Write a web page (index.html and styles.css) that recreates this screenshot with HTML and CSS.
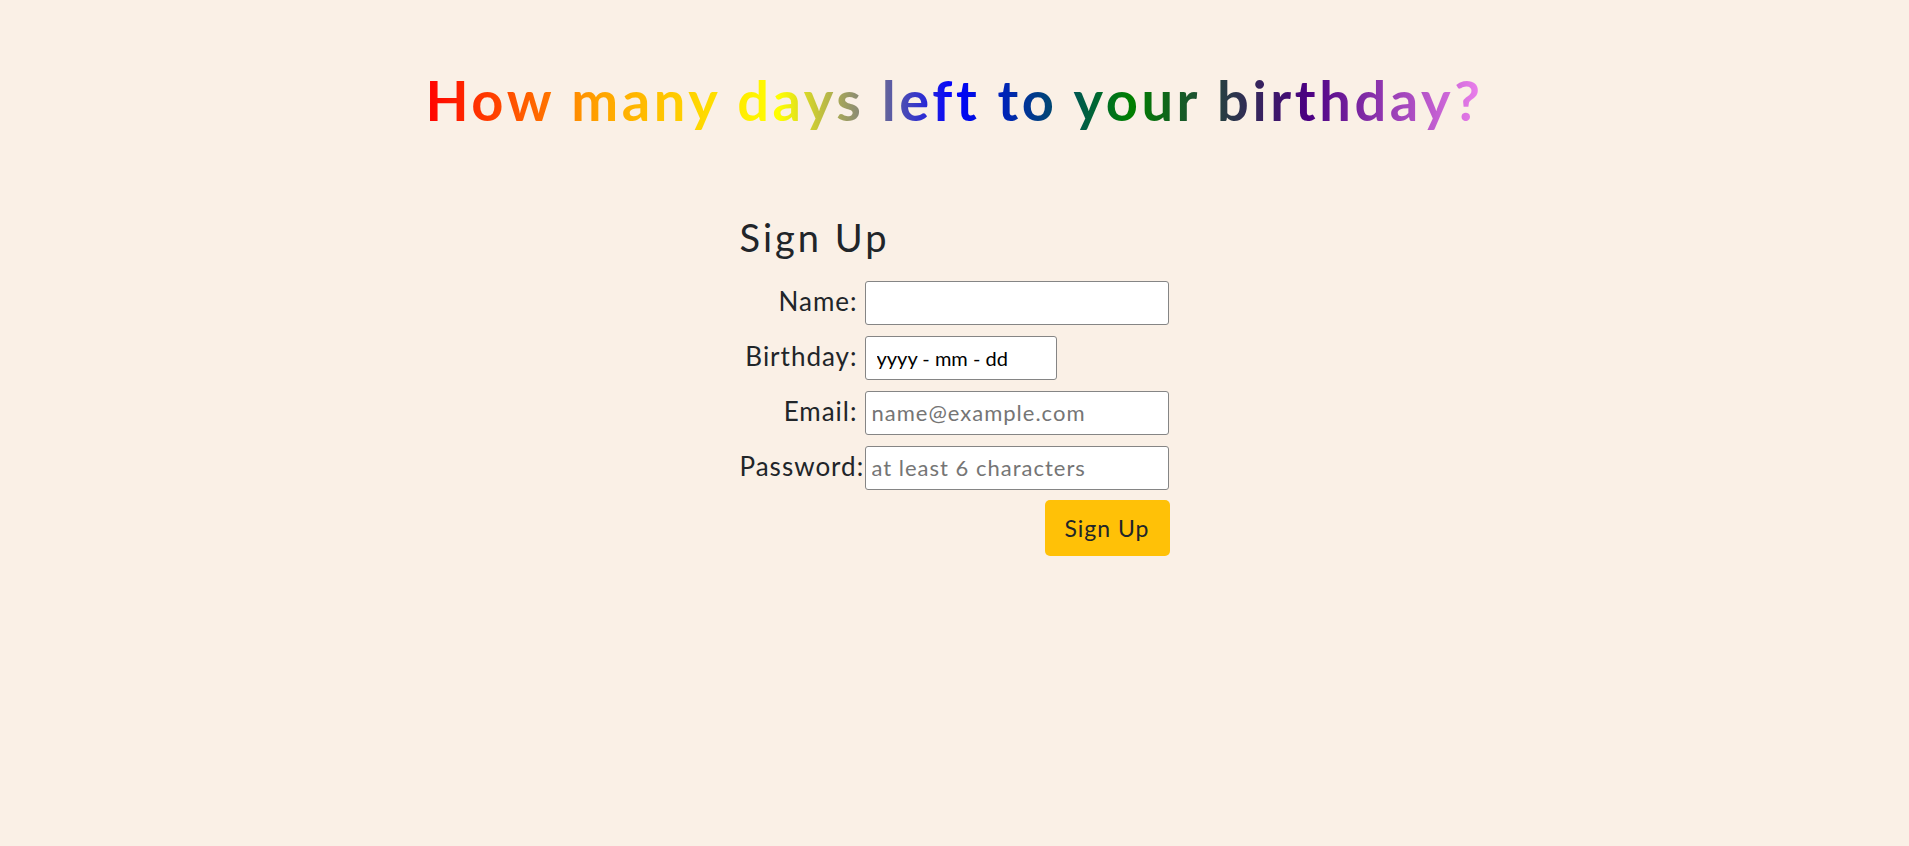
FILE: index.html
```html
<!DOCTYPE html>
<html lang="en">
<head>
<meta charset="utf-8">
<title>Birthday countdown</title>
<link rel="stylesheet" href="styles.css">
</head>
<body>
<main class="page">
  <h1 class="title"><span class="rainbow">How many days left to your birthday?</span></h1>
  <form class="signup">
    <h2 class="signup-title">Sign Up</h2>
    <div class="field">
      <label class="field-label" for="name">Name:</label>
      <input class="field-input" id="name" type="text">
    </div>
    <div class="field">
      <label class="field-label" for="birthday">Birthday:</label>
      <input class="field-input field-input--date" id="birthday" type="text" value="yyyy - mm - dd">
    </div>
    <div class="field">
      <label class="field-label" for="email">Email:</label>
      <input class="field-input" id="email" type="email" placeholder="name@example.com">
    </div>
    <div class="field">
      <label class="field-label" for="password">Password:</label>
      <input class="field-input" id="password" type="password" placeholder="at least 6 characters">
    </div>
    <div class="actions">
      <button class="btn-submit" type="button">Sign Up</button>
    </div>
  </form>
</main>
</body>
</html>
```
FILE: styles.css
```css
* { box-sizing: border-box; }

html, body {
  margin: 0;
  padding: 0;
}

body {
  background: #faf0e6;
  color: #212529;
  font-family: "Lato", "Noto Sans", sans-serif;
  min-height: 100vh;
}

.page {
  display: flex;
  flex-direction: column;
  align-items: center;
}

.title {
  margin: 66px 0 0;
  font-size: 56px;
  line-height: 1.2;
  font-weight: 700;
  letter-spacing: 3.6px;
  text-align: center;
}

.rainbow {
  background: linear-gradient(to right, red, orange, yellow, blue, green, indigo, violet);
  -webkit-background-clip: text;
  background-clip: text;
  color: transparent;
}

.signup {
  width: 430px;
  margin-top: 82px;
  display: flex;
  flex-direction: column;
  gap: 11px;
}

.signup-title {
  margin: 0 0 9px;
  font-size: 38px;
  line-height: 1.2;
  font-weight: 400;
  letter-spacing: 3px;
}

.field {
  display: grid;
  grid-template-columns: 125px 304px;
  align-items: start;
}

.field-label {
  width: 125px;
  padding-right: 7px;
  text-align: right;
  font-size: 26px;
  line-height: 40px;
  letter-spacing: 1px;
  white-space: nowrap;
}

.field-input {
  height: 44px;
  width: 304px;
  border: 1px solid #858585;
  border-radius: 3px;
  background: #fff;
  padding: 0 6px;
  font-family: inherit;
  font-size: 22px;
  letter-spacing: 1px;
  color: #000;
  outline: none;
}

.field-input--date {
  width: 192px;
  padding-left: 11px;
  font-size: 20px;
  letter-spacing: 0;
}

.field-input::placeholder {
  color: #757575;
  opacity: 1;
}

.actions {
  display: flex;
  justify-content: flex-end;
  margin-top: -1px;
}

.btn-submit {
  width: 125px;
  height: 56px;
  border: none;
  border-radius: 5px;
  background: #ffc107;
  color: #212529;
  font-family: inherit;
  font-size: 23px;
  letter-spacing: 1px;
  cursor: pointer;
}
```
